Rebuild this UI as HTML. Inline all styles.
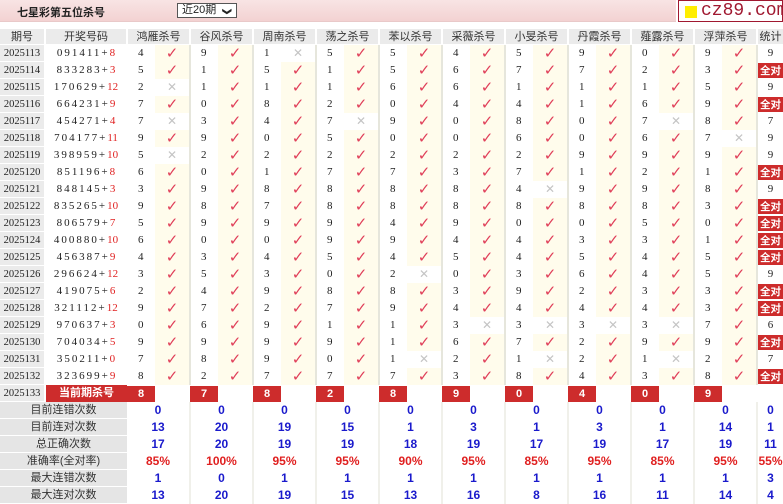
<!DOCTYPE html>
<html><head><meta charset="utf-8"><style>
*{margin:0;padding:0;box-sizing:border-box}
body{width:783px;height:504px;overflow:hidden;background:#fff;font-family:"Liberation Serif","Noto Serif CJK SC","Noto Sans CJK SC",serif;font-size:11px;color:#222;position:relative}
.top{position:absolute;left:0;top:0;width:676px;height:22px;background:linear-gradient(#f8e4e4,#f3d2d2);border-bottom:1px solid #e9c9c9}
.title{position:absolute;left:17px;top:4px;font-size:11px;font-weight:bold;font-family:"Liberation Sans","Noto Sans CJK SC",sans-serif;color:#222}
.sel{position:absolute;left:177px;top:3px;width:60px;height:15px;border:1px solid #555;background:#fff;font-size:11px;line-height:13px;padding-left:4px;font-family:"Liberation Sans","Noto Sans CJK SC",sans-serif}
.sel i{position:absolute;right:5px;top:1px;font-style:normal;font-size:9px;font-weight:bold;transform:rotate(90deg)}
.logo{position:absolute;left:678px;top:0;width:105px;height:22px;border:1px solid #a01830;background:#fff}
.logo b{position:absolute;left:6px;top:5px;width:12px;height:12px;background:#ffee00}
.logo span{position:absolute;left:22px;top:0;font-family:"Liberation Mono",monospace;font-size:18px;line-height:21px;color:#a01830}
table{position:absolute;left:0;top:29px;border-collapse:collapse;table-layout:fixed;width:783px}
tr{height:17px}
td,th{height:17px;padding:0;text-align:center;white-space:nowrap;overflow:hidden;font-weight:normal;line-height:15px;font-family:"Liberation Sans","Noto Sans CJK SC",sans-serif;vertical-align:middle}
th{background:#ebebeb;color:#333;border-right:2px solid #fff;box-shadow:inset 0 -1px #fff;height:16px}
tr.h{height:16px}
td.q{background:#ebebeb;box-shadow:inset 0 -1px #fff;border-right:2px solid #fff;font-size:10.5px;font-family:"Liberation Serif",serif}
td.k{letter-spacing:2px;font-family:"Liberation Serif",serif;font-size:11px;border-right:2px solid #fff}
td.k b{color:#e02020;font-weight:normal;letter-spacing:0}
td.n{text-align:left;padding-left:10px;font-family:"Liberation Serif",serif;font-size:11px}
td.y,td.x{border-right:2px solid #e6e6dc;font-family:"DejaVu Sans",sans-serif}
td.y{background:#fffcec;color:#e0405a;font-size:15px}
td.x{color:#c4c4c4;font-size:12px}
td.s{font-family:"Liberation Serif",serif;font-size:11px}
td.s.a span{display:block;height:15px;line-height:15px;background:#cd2c2c;color:#fff;font-weight:bold;font-size:10.5px;font-family:"Noto Sans CJK SC",sans-serif}
td.kr{background:#cd2c2c;color:#fff;font-weight:bold;font-size:11px}
td.kn span{display:block;background:#cd2c2c;color:#fff;font-weight:bold;width:28px;height:16px;line-height:16px;text-align:center}
td.l{background:#e5e5e5;box-shadow:inset 0 -1px #fff;color:#333;font-size:11px}
td.v{color:#1a1acc;font-weight:bold;font-size:12px;border-right:2px solid #f0f0ea}
td.p{color:#e02020;font-weight:bold;font-size:12px;border-right:2px solid #f0f0ea}
</style></head><body>
<div class="top"><div class="title">七星彩第五位杀号</div><div class="sel">近20期<i>&#10095;</i></div></div>
<div class="logo"><b></b><span>cz89.com</span></div>
<table>
<colgroup><col style="width:45px"><col style="width:82px">
<col style="width:28px"><col style="width:35px"><col style="width:28px"><col style="width:35px"><col style="width:28px"><col style="width:35px"><col style="width:28px"><col style="width:35px"><col style="width:28px"><col style="width:35px"><col style="width:28px"><col style="width:35px"><col style="width:28px"><col style="width:35px"><col style="width:28px"><col style="width:35px"><col style="width:28px"><col style="width:35px"><col style="width:28px"><col style="width:35px"><col style="width:26px"></colgroup>
<tr class=h><th>期号</th><th>开奖号码</th><th colspan=2>鸿雁杀号</th><th colspan=2>谷风杀号</th><th colspan=2>周南杀号</th><th colspan=2>荡之杀号</th><th colspan=2>苯以杀号</th><th colspan=2>采薇杀号</th><th colspan=2>小旻杀号</th><th colspan=2>丹霞杀号</th><th colspan=2>薤露杀号</th><th colspan=2>浮萍杀号</th><th style="border-right:0">统计</th></tr>
<tr><td class=q>2025113</td><td class=k>091411+<b>8</b></td><td class=n>4</td><td class=y>✓</td><td class=n>9</td><td class=y>✓</td><td class=n>1</td><td class=x>✕</td><td class=n>5</td><td class=y>✓</td><td class=n>5</td><td class=y>✓</td><td class=n>4</td><td class=y>✓</td><td class=n>5</td><td class=y>✓</td><td class=n>9</td><td class=y>✓</td><td class=n>0</td><td class=y>✓</td><td class=n>9</td><td class=y>✓</td><td class=s>9</td></tr>
<tr><td class=q>2025114</td><td class=k>833283+<b>3</b></td><td class=n>5</td><td class=y>✓</td><td class=n>1</td><td class=y>✓</td><td class=n>5</td><td class=y>✓</td><td class=n>1</td><td class=y>✓</td><td class=n>5</td><td class=y>✓</td><td class=n>6</td><td class=y>✓</td><td class=n>7</td><td class=y>✓</td><td class=n>7</td><td class=y>✓</td><td class=n>2</td><td class=y>✓</td><td class=n>3</td><td class=y>✓</td><td class="s a"><span>全对</span></td></tr>
<tr><td class=q>2025115</td><td class=k>170629+<b>12</b></td><td class=n>2</td><td class=x>✕</td><td class=n>1</td><td class=y>✓</td><td class=n>1</td><td class=y>✓</td><td class=n>1</td><td class=y>✓</td><td class=n>6</td><td class=y>✓</td><td class=n>6</td><td class=y>✓</td><td class=n>1</td><td class=y>✓</td><td class=n>1</td><td class=y>✓</td><td class=n>1</td><td class=y>✓</td><td class=n>5</td><td class=y>✓</td><td class=s>9</td></tr>
<tr><td class=q>2025116</td><td class=k>664231+<b>9</b></td><td class=n>7</td><td class=y>✓</td><td class=n>0</td><td class=y>✓</td><td class=n>8</td><td class=y>✓</td><td class=n>2</td><td class=y>✓</td><td class=n>0</td><td class=y>✓</td><td class=n>4</td><td class=y>✓</td><td class=n>4</td><td class=y>✓</td><td class=n>1</td><td class=y>✓</td><td class=n>6</td><td class=y>✓</td><td class=n>9</td><td class=y>✓</td><td class="s a"><span>全对</span></td></tr>
<tr><td class=q>2025117</td><td class=k>454271+<b>4</b></td><td class=n>7</td><td class=x>✕</td><td class=n>3</td><td class=y>✓</td><td class=n>4</td><td class=y>✓</td><td class=n>7</td><td class=x>✕</td><td class=n>9</td><td class=y>✓</td><td class=n>0</td><td class=y>✓</td><td class=n>8</td><td class=y>✓</td><td class=n>0</td><td class=y>✓</td><td class=n>7</td><td class=x>✕</td><td class=n>8</td><td class=y>✓</td><td class=s>7</td></tr>
<tr><td class=q>2025118</td><td class=k>704177+<b>11</b></td><td class=n>9</td><td class=y>✓</td><td class=n>9</td><td class=y>✓</td><td class=n>0</td><td class=y>✓</td><td class=n>5</td><td class=y>✓</td><td class=n>0</td><td class=y>✓</td><td class=n>0</td><td class=y>✓</td><td class=n>6</td><td class=y>✓</td><td class=n>0</td><td class=y>✓</td><td class=n>6</td><td class=y>✓</td><td class=n>7</td><td class=x>✕</td><td class=s>9</td></tr>
<tr><td class=q>2025119</td><td class=k>398959+<b>10</b></td><td class=n>5</td><td class=x>✕</td><td class=n>2</td><td class=y>✓</td><td class=n>2</td><td class=y>✓</td><td class=n>2</td><td class=y>✓</td><td class=n>2</td><td class=y>✓</td><td class=n>2</td><td class=y>✓</td><td class=n>2</td><td class=y>✓</td><td class=n>9</td><td class=y>✓</td><td class=n>9</td><td class=y>✓</td><td class=n>9</td><td class=y>✓</td><td class=s>9</td></tr>
<tr><td class=q>2025120</td><td class=k>851196+<b>8</b></td><td class=n>6</td><td class=y>✓</td><td class=n>0</td><td class=y>✓</td><td class=n>1</td><td class=y>✓</td><td class=n>7</td><td class=y>✓</td><td class=n>7</td><td class=y>✓</td><td class=n>3</td><td class=y>✓</td><td class=n>7</td><td class=y>✓</td><td class=n>1</td><td class=y>✓</td><td class=n>2</td><td class=y>✓</td><td class=n>1</td><td class=y>✓</td><td class="s a"><span>全对</span></td></tr>
<tr><td class=q>2025121</td><td class=k>848145+<b>3</b></td><td class=n>3</td><td class=y>✓</td><td class=n>9</td><td class=y>✓</td><td class=n>8</td><td class=y>✓</td><td class=n>8</td><td class=y>✓</td><td class=n>8</td><td class=y>✓</td><td class=n>8</td><td class=y>✓</td><td class=n>4</td><td class=x>✕</td><td class=n>9</td><td class=y>✓</td><td class=n>9</td><td class=y>✓</td><td class=n>8</td><td class=y>✓</td><td class=s>9</td></tr>
<tr><td class=q>2025122</td><td class=k>835265+<b>10</b></td><td class=n>9</td><td class=y>✓</td><td class=n>8</td><td class=y>✓</td><td class=n>7</td><td class=y>✓</td><td class=n>8</td><td class=y>✓</td><td class=n>8</td><td class=y>✓</td><td class=n>8</td><td class=y>✓</td><td class=n>8</td><td class=y>✓</td><td class=n>8</td><td class=y>✓</td><td class=n>8</td><td class=y>✓</td><td class=n>3</td><td class=y>✓</td><td class="s a"><span>全对</span></td></tr>
<tr><td class=q>2025123</td><td class=k>806579+<b>7</b></td><td class=n>5</td><td class=y>✓</td><td class=n>9</td><td class=y>✓</td><td class=n>9</td><td class=y>✓</td><td class=n>9</td><td class=y>✓</td><td class=n>4</td><td class=y>✓</td><td class=n>9</td><td class=y>✓</td><td class=n>0</td><td class=y>✓</td><td class=n>0</td><td class=y>✓</td><td class=n>5</td><td class=y>✓</td><td class=n>0</td><td class=y>✓</td><td class="s a"><span>全对</span></td></tr>
<tr><td class=q>2025124</td><td class=k>400880+<b>10</b></td><td class=n>6</td><td class=y>✓</td><td class=n>0</td><td class=y>✓</td><td class=n>0</td><td class=y>✓</td><td class=n>9</td><td class=y>✓</td><td class=n>9</td><td class=y>✓</td><td class=n>4</td><td class=y>✓</td><td class=n>4</td><td class=y>✓</td><td class=n>3</td><td class=y>✓</td><td class=n>3</td><td class=y>✓</td><td class=n>1</td><td class=y>✓</td><td class="s a"><span>全对</span></td></tr>
<tr><td class=q>2025125</td><td class=k>456387+<b>9</b></td><td class=n>4</td><td class=y>✓</td><td class=n>3</td><td class=y>✓</td><td class=n>4</td><td class=y>✓</td><td class=n>5</td><td class=y>✓</td><td class=n>4</td><td class=y>✓</td><td class=n>5</td><td class=y>✓</td><td class=n>4</td><td class=y>✓</td><td class=n>5</td><td class=y>✓</td><td class=n>4</td><td class=y>✓</td><td class=n>5</td><td class=y>✓</td><td class="s a"><span>全对</span></td></tr>
<tr><td class=q>2025126</td><td class=k>296624+<b>12</b></td><td class=n>3</td><td class=y>✓</td><td class=n>5</td><td class=y>✓</td><td class=n>3</td><td class=y>✓</td><td class=n>0</td><td class=y>✓</td><td class=n>2</td><td class=x>✕</td><td class=n>0</td><td class=y>✓</td><td class=n>3</td><td class=y>✓</td><td class=n>6</td><td class=y>✓</td><td class=n>4</td><td class=y>✓</td><td class=n>5</td><td class=y>✓</td><td class=s>9</td></tr>
<tr><td class=q>2025127</td><td class=k>419075+<b>6</b></td><td class=n>2</td><td class=y>✓</td><td class=n>4</td><td class=y>✓</td><td class=n>9</td><td class=y>✓</td><td class=n>8</td><td class=y>✓</td><td class=n>8</td><td class=y>✓</td><td class=n>3</td><td class=y>✓</td><td class=n>9</td><td class=y>✓</td><td class=n>2</td><td class=y>✓</td><td class=n>3</td><td class=y>✓</td><td class=n>3</td><td class=y>✓</td><td class="s a"><span>全对</span></td></tr>
<tr><td class=q>2025128</td><td class=k>321112+<b>12</b></td><td class=n>9</td><td class=y>✓</td><td class=n>7</td><td class=y>✓</td><td class=n>2</td><td class=y>✓</td><td class=n>7</td><td class=y>✓</td><td class=n>9</td><td class=y>✓</td><td class=n>4</td><td class=y>✓</td><td class=n>4</td><td class=y>✓</td><td class=n>4</td><td class=y>✓</td><td class=n>4</td><td class=y>✓</td><td class=n>3</td><td class=y>✓</td><td class="s a"><span>全对</span></td></tr>
<tr><td class=q>2025129</td><td class=k>970637+<b>3</b></td><td class=n>0</td><td class=y>✓</td><td class=n>6</td><td class=y>✓</td><td class=n>9</td><td class=y>✓</td><td class=n>1</td><td class=y>✓</td><td class=n>1</td><td class=y>✓</td><td class=n>3</td><td class=x>✕</td><td class=n>3</td><td class=x>✕</td><td class=n>3</td><td class=x>✕</td><td class=n>3</td><td class=x>✕</td><td class=n>7</td><td class=y>✓</td><td class=s>6</td></tr>
<tr><td class=q>2025130</td><td class=k>704034+<b>5</b></td><td class=n>9</td><td class=y>✓</td><td class=n>9</td><td class=y>✓</td><td class=n>9</td><td class=y>✓</td><td class=n>9</td><td class=y>✓</td><td class=n>1</td><td class=y>✓</td><td class=n>6</td><td class=y>✓</td><td class=n>7</td><td class=y>✓</td><td class=n>2</td><td class=y>✓</td><td class=n>9</td><td class=y>✓</td><td class=n>9</td><td class=y>✓</td><td class="s a"><span>全对</span></td></tr>
<tr><td class=q>2025131</td><td class=k>350211+<b>0</b></td><td class=n>7</td><td class=y>✓</td><td class=n>8</td><td class=y>✓</td><td class=n>9</td><td class=y>✓</td><td class=n>0</td><td class=y>✓</td><td class=n>1</td><td class=x>✕</td><td class=n>2</td><td class=y>✓</td><td class=n>1</td><td class=x>✕</td><td class=n>2</td><td class=y>✓</td><td class=n>1</td><td class=x>✕</td><td class=n>2</td><td class=y>✓</td><td class=s>7</td></tr>
<tr><td class=q>2025132</td><td class=k>323699+<b>9</b></td><td class=n>8</td><td class=y>✓</td><td class=n>2</td><td class=y>✓</td><td class=n>7</td><td class=y>✓</td><td class=n>7</td><td class=y>✓</td><td class=n>7</td><td class=y>✓</td><td class=n>3</td><td class=y>✓</td><td class=n>8</td><td class=y>✓</td><td class=n>4</td><td class=y>✓</td><td class=n>3</td><td class=y>✓</td><td class=n>8</td><td class=y>✓</td><td class="s a"><span>全对</span></td></tr>
<tr><td class=q>2025133</td><td class=kr>当前期杀号</td><td class=kn><span>8</span></td><td></td><td class=kn><span>7</span></td><td></td><td class=kn><span>8</span></td><td></td><td class=kn><span>2</span></td><td></td><td class=kn><span>8</span></td><td></td><td class=kn><span>9</span></td><td></td><td class=kn><span>0</span></td><td></td><td class=kn><span>4</span></td><td></td><td class=kn><span>0</span></td><td></td><td class=kn><span>9</span></td><td></td><td></td></tr>
<tr><td class=l colspan=2>目前连错次数</td><td class=v colspan=2>0</td><td class=v colspan=2>0</td><td class=v colspan=2>0</td><td class=v colspan=2>0</td><td class=v colspan=2>0</td><td class=v colspan=2>0</td><td class=v colspan=2>0</td><td class=v colspan=2>0</td><td class=v colspan=2>0</td><td class=v colspan=2>0</td><td class=v style="border:0">0</td></tr>
<tr><td class=l colspan=2>目前连对次数</td><td class=v colspan=2>13</td><td class=v colspan=2>20</td><td class=v colspan=2>19</td><td class=v colspan=2>15</td><td class=v colspan=2>1</td><td class=v colspan=2>3</td><td class=v colspan=2>1</td><td class=v colspan=2>3</td><td class=v colspan=2>1</td><td class=v colspan=2>14</td><td class=v style="border:0">1</td></tr>
<tr><td class=l colspan=2>总正确次数</td><td class=v colspan=2>17</td><td class=v colspan=2>20</td><td class=v colspan=2>19</td><td class=v colspan=2>19</td><td class=v colspan=2>18</td><td class=v colspan=2>19</td><td class=v colspan=2>17</td><td class=v colspan=2>19</td><td class=v colspan=2>17</td><td class=v colspan=2>19</td><td class=v style="border:0">11</td></tr>
<tr><td class=l colspan=2>准确率(全对率)</td><td class=p colspan=2>85%</td><td class=p colspan=2>100%</td><td class=p colspan=2>95%</td><td class=p colspan=2>95%</td><td class=p colspan=2>90%</td><td class=p colspan=2>95%</td><td class=p colspan=2>85%</td><td class=p colspan=2>95%</td><td class=p colspan=2>85%</td><td class=p colspan=2>95%</td><td class=p style="border:0">55%</td></tr>
<tr><td class=l colspan=2>最大连错次数</td><td class=v colspan=2>1</td><td class=v colspan=2>0</td><td class=v colspan=2>1</td><td class=v colspan=2>1</td><td class=v colspan=2>1</td><td class=v colspan=2>1</td><td class=v colspan=2>1</td><td class=v colspan=2>1</td><td class=v colspan=2>1</td><td class=v colspan=2>1</td><td class=v style="border:0">3</td></tr>
<tr><td class=l colspan=2>最大连对次数</td><td class=v colspan=2>13</td><td class=v colspan=2>20</td><td class=v colspan=2>19</td><td class=v colspan=2>15</td><td class=v colspan=2>13</td><td class=v colspan=2>16</td><td class=v colspan=2>8</td><td class=v colspan=2>16</td><td class=v colspan=2>11</td><td class=v colspan=2>14</td><td class=v style="border:0">4</td></tr>
</table>
</body></html>
